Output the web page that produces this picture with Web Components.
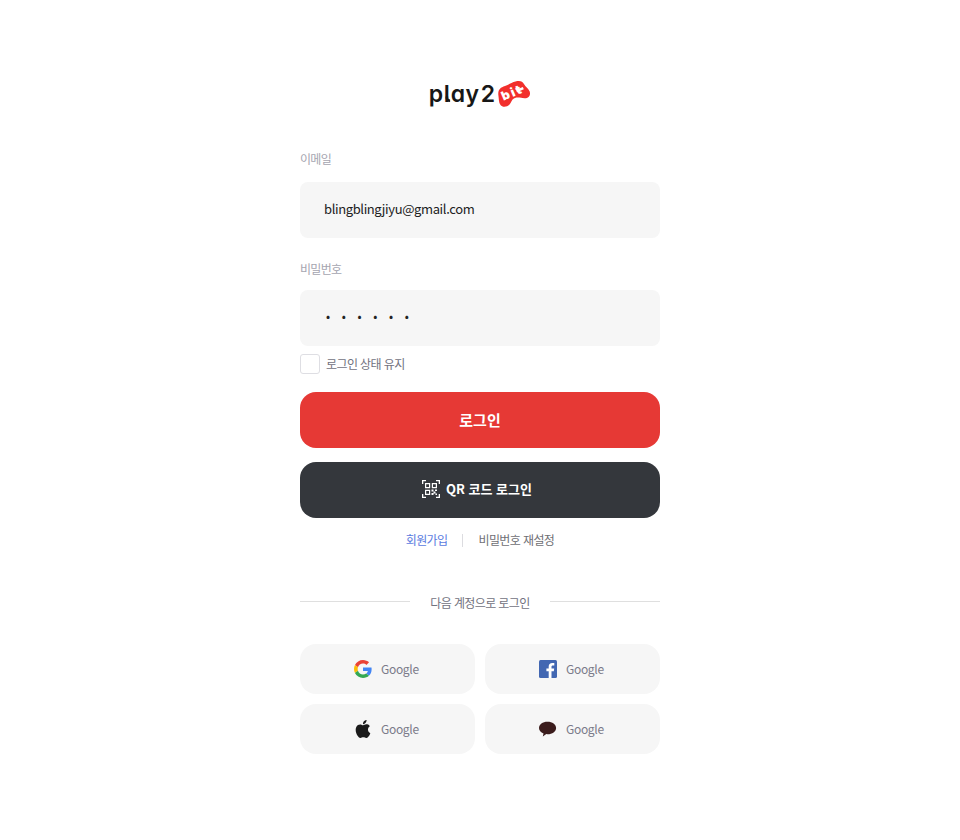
<!DOCTYPE html>
<html lang="ko">
<head>
<meta charset="utf-8">
<title>play2bit</title>
<style>
body{margin:0;background:#fff;font-family:"Noto Sans CJK KR",sans-serif;color:#222}
</style>
</head>
<body>
<login-page></login-page>
<script>
function define(name, html) {
  const t = document.createElement('template');
  t.innerHTML = html;
  customElements.define(name, class extends HTMLElement {
    constructor() {
      super();
      this.attachShadow({ mode: 'open' }).append(t.content.cloneNode(true));
    }
  });
}

define('brand-logo', `<style>
:host{display:block;width:102px;height:30px}
svg{display:block;overflow:visible}
.word{font:600 23px Inter,sans-serif;font-feature-settings:"cv11" 1;fill:#171717}
.bit{font:900 12.5px Inter,sans-serif;fill:#fff}
</style>
<svg width="102" height="30" viewBox="0 0 102 30">
<text class="word" x="-.3 14.8 21.700 36.500 51.800" y="23">play2</text>
<path fill="none" stroke="#171717" stroke-width="2.600" d="M17.900 17.500v1.500q0 2.700 3.200 2.700"/>
<path fill="#f22f2c" d="M69.300 15.500C69 10.500 71.500 8.400 76 7C79.500 5.900 82.500 3.400 86.500 2.500C91 1.300 93.500 2.300 95.300 5.500C96.600 8 99.500 9.500 100.700 12.500C101.900 16.200 99.500 19.500 95.500 19.300C92 19.100 89.200 17.900 86 19C82.500 20.200 83 22.800 80.500 25.500C78 28.200 73.500 28.600 71.500 26C69.600 23.500 70 20 69.300 15.500Z"/>
<text class="bit" x="74.500" y="21.800" transform="rotate(-23 74.500 21.800)" textLength="20.500" lengthAdjust="spacing">bit</text>
<path stroke="#fff" stroke-width="2.500" d="M87.500 12l6.800-2.900"/>
</svg>`);

define('text-field', `<style>
:host{display:block}
.label{height:20px;line-height:20px;font-size:12px;letter-spacing:-.7px;color:#a5a5b0;margin-bottom:var(--label-gap,13px)}
.box{box-sizing:border-box;height:56px;padding:0 24px;border-radius:8px;background:#f6f6f6;line-height:54px;color:#222;font-size:13px;letter-spacing:-.38px;white-space:nowrap}
</style><div class="label"><slot name="label"></slot></div><div class="box"><slot></slot></div>`);

define('check-option', `<style>
:host{display:flex;align-items:center;gap:6px;height:20px;font-size:12px;line-height:20px;letter-spacing:-.6px;color:#72727e}
i{box-sizing:border-box;width:20px;height:20px;border:1px solid #dedee3;border-radius:3px;background:#fff}
</style><i></i><span><slot></slot></span>`);

define('action-button', `<style>
:host{display:flex;align-items:center;justify-content:center;gap:6px;height:56px;border-radius:16px;background:var(--fill);color:#fff;font-weight:700;font-size:var(--size,15px);letter-spacing:var(--track,0);line-height:20px}
</style><slot name="icon"></slot><span><slot></slot></span>`);

define('qr-icon', `<style>:host{display:block;width:18px;height:18px}svg{display:block}</style>
<svg width="18" height="18" viewBox="0 0 18 18" fill="none" stroke="#fff" stroke-width="1.3">
<path d="M.65 4V.65H4M14 .65h3.35V4M.65 14v3.35H4M14 17.35h3.35V14"/>
<path stroke-width="1.2" d="M3.6 3.6h4v4h-4zM10.4 3.6h4v4h-4zM3.6 10.4h4v4h-4z"/>
<path fill="#fff" stroke="none" d="M9.5 9.5h2v2h-2zM13 9.5h2V11h-2zM11.5 11.5h2v2h-2zM9.5 13h2v2h-2zM13.5 13.5H15V15h-1.5z"/>
</svg>`);

define('help-links', `<style>
:host{display:flex;align-items:center;justify-content:center;height:20px;font-size:12px;line-height:20px;letter-spacing:-.6px;color:#6f6f75}
.join{color:#5b7be0}
i{width:1px;height:13px;background:#dcdce0;margin:0 15px}
</style><span class="join"><slot name="join"></slot></span><i></i><span><slot></slot></span>`);

define('line-heading', `<style>
:host{display:flex;align-items:center;gap:20px;height:20px;font-size:12px;line-height:20px;letter-spacing:-.62px;color:#72727e}
:host::before,:host::after{content:"";width:110px;height:1px;background:#dfdfdf;margin-bottom:3px;flex:none}
span{flex:none;width:100px;text-align:center;white-space:nowrap}
</style><span><slot></slot></span>`);

define('social-button', `<style>
:host{box-sizing:border-box;display:flex;align-items:center;gap:9px;height:50px;padding-left:54px;border-radius:16px;background:#f6f6f6;color:#7b7b8a;font-size:12px;letter-spacing:-.32px;line-height:20px}
::slotted(svg){display:block;flex:none}
</style><slot name="icon"></slot><span><slot></slot></span>`);

define('social-grid', `<style>
:host{display:grid;grid-template-columns:1fr 1fr;gap:10px}
</style><slot></slot>`);

define('login-page', `<style>
:host{display:block;box-sizing:border-box;width:360px;height:840px;margin:0 auto;padding-top:79px}
brand-logo{margin:0 auto 40px}
.pw{margin-top:21px;--label-gap:11px}
.dots{display:block;line-height:51px;padding-left:2px;font-size:12px;letter-spacing:11.650px}
check-option{margin-top:8px}
.login{--fill:#e63935;margin-top:18px}
.qr{--fill:#34373c;--size:13px;--track:0;margin-top:14px;box-sizing:border-box;padding:0 6px 2px 0}
help-links{margin-top:12px}
line-heading{margin-top:43px}
social-grid{margin-top:31px}
</style>
<brand-logo></brand-logo>
<text-field><span slot="label">이메일</span><span class="email">blingblingjiyu@gmail.com</span></text-field>
<text-field class="pw"><span slot="label">비밀번호</span><span class="dots">••••••</span></text-field>
<check-option>로그인 상태 유지</check-option>
<action-button class="login">로그인</action-button>
<action-button class="qr"><qr-icon slot="icon"></qr-icon>QR 코드 로그인</action-button>
<help-links><span slot="join">회원가입</span>비밀번호 재설정</help-links>
<line-heading>다음 계정으로 로그인</line-heading>
<social-grid>
<social-button><svg slot="icon" width="18" height="18" viewBox="0 0 48 48"><path fill="#EA4335" d="M24 9.5c3.54 0 6.71 1.22 9.21 3.6l6.85-6.85C35.9 2.38 30.47 0 24 0 14.62 0 6.51 5.38 2.56 13.22l7.98 6.19C12.43 13.72 17.74 9.5 24 9.5z"/><path fill="#4285F4" d="M46.98 24.55c0-1.57-.15-3.09-.38-4.55H24v9.02h12.94c-.58 2.96-2.26 5.48-4.78 7.18l7.73 6c4.51-4.18 7.09-10.36 7.09-17.65z"/><path fill="#FBBC05" d="M10.53 28.59A14.5 14.5 0 0 1 9.77 24c0-1.6.27-3.14.76-4.59l-7.98-6.19A24 24 0 0 0 0 24c0 3.88.92 7.54 2.56 10.78z"/><path fill="#34A853" d="M24 48c6.48 0 11.93-2.13 15.89-5.81l-7.73-6c-2.15 1.45-4.92 2.3-8.16 2.3-6.26 0-11.57-4.22-13.47-9.91l-7.98 6.19C6.51 42.62 14.62 48 24 48z"/></svg>Google</social-button>
<social-button><svg slot="icon" width="18" height="18" viewBox="0 0 18 18"><rect width="18" height="18" rx="1.5" fill="#4267b2"/><path fill="#fff" d="M9.7 18v-6.7H7.4V8.6h2.3v-2C9.7 4.300 11.100 3 13.200 3c1 0 1.800.1 2.100.1v2.400h-1.400c-1.100 0-1.400.6-1.400 1.400v1.700h2.700l-.4 2.700h-2.300V18z"/></svg>Google</social-button>
<social-button><svg slot="icon" width="18" height="18" viewBox="0 0 24 24"><path fill="#1b1b1b" d="M12.152 6.896c-.948 0-2.415-1.078-3.960-1.040-2.040.027-3.910 1.183-4.961 3.014-2.117 3.675-.546 9.103 1.519 12.090 1.013 1.454 2.208 3.090 3.792 3.039 1.520-.065 2.090-.987 3.935-.987 1.831 0 2.350.987 3.960.948 1.637-.026 2.676-1.480 3.676-2.948 1.156-1.688 1.636-3.325 1.662-3.415-.039-.013-3.182-1.221-3.220-4.857-.026-3.040 2.480-4.494 2.597-4.559-1.429-2.090-3.623-2.324-4.390-2.376-2-.156-3.675 1.090-4.610 1.090zM15.530 3.830c.843-1.012 1.400-2.427 1.245-3.830-1.207.052-2.662.805-3.532 1.818-.780.896-1.454 2.338-1.273 3.714 1.338.104 2.715-.688 3.559-1.701"/></svg>Google</social-button>
<social-button><svg slot="icon" width="18" height="18" viewBox="0 0 18 18"><path fill="#3b1c1c" d="M8.500 1.700c4.900 0 8.600 2.700 8.600 6.200s-3.700 6.300-8.600 6.300l-1.200-.1-3.500 2.500.7-3.200C1.800 12.300 0 10.300 0 7.900c0-3.500 3.600-6.200 8.500-6.200z"/></svg>Google</social-button>
</social-grid>`);
</script>
</body>
</html>
